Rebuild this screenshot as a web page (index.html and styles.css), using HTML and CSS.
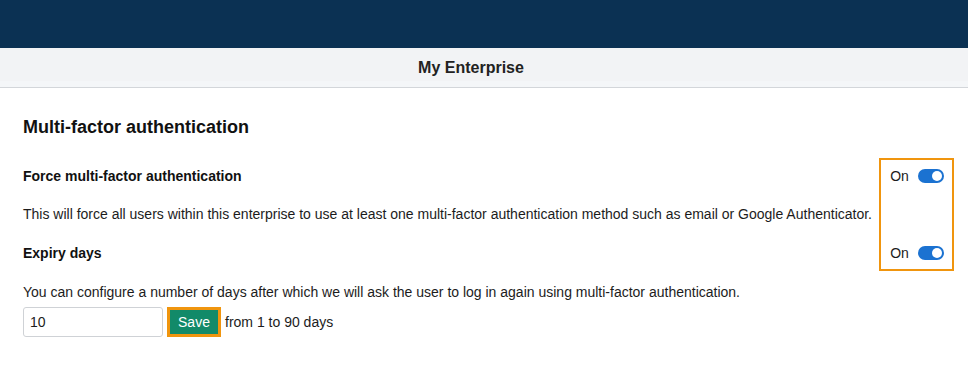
FILE: index.html
```html
<!DOCTYPE html>
<html>
<head>
<meta charset="utf-8">
<link rel="stylesheet" href="styles.css">
</head>
<body>
<header class="topbar"></header>
<div class="subbar"><span class="subbar-title">My Enterprise</span></div>
<main class="content">
  <h2 class="section-title">Multi-factor authentication</h2>
  <div class="settings">
    <div class="label row1">Force multi-factor authentication</div>
    <div class="highlight"></div>
    <div class="switch-cell row1">
      <span class="switch-text">On</span>
      <span class="switch"><span class="knob"></span></span>
    </div>
    <p class="desc row2">This will force all users within this enterprise to use at least one multi-factor authentication method such as email or Google Authenticator.</p>
    <div class="label row3">Expiry days</div>
    <div class="switch-cell row3">
      <span class="switch-text">On</span>
      <span class="switch"><span class="knob"></span></span>
    </div>
    <p class="desc2">You can configure a number of days after which we will ask the user to log in again using multi-factor authentication.</p>
    <div class="days-row">
      <input class="days-input" type="text" value="10">
      <button class="save-btn">Save</button>
      <span class="days-hint">from 1 to 90 days</span>
    </div>
  </div>
</main>
</body>
</html>
```
FILE: styles.css
```css
* { box-sizing: border-box; }
html, body { margin: 0; padding: 0; background: #fff; }
body {
  font-family: "Liberation Sans", Arial, sans-serif;
  font-size: 14px;
  color: #1c1c1c;
}
.topbar {
  height: 48px;
  background: #0b3153;
}
.subbar {
  height: 40px;
  background: #f2f3f5;
  border-bottom: 1px solid #d3d6da;
  box-shadow: inset 0 -6px 0 #f4f6f8;
  display: flex;
  align-items: center;
  justify-content: center;
  padding-right: 26px;
}
.subbar-title {
  font-weight: bold;
  font-size: 16px;
  color: #222;
}
.content {
  padding: 28px 14px 0 23px;
}
.section-title {
  margin: 0;
  font-size: 18px;
  line-height: 22px;
  font-weight: bold;
  color: #111;
}
.settings {
  margin-top: 20px;
  display: grid;
  grid-template-columns: 1fr 75px;
  grid-template-rows: 36px 40px 37px auto auto;
  align-items: center;
}
.label {
  grid-column: 1;
  font-weight: bold;
  font-size: 14px;
  line-height: 16px;
  color: #111;
}
.row1 { grid-row: 1; }
.row2 { grid-row: 2; }
.row3 { grid-row: 3; }
.highlight {
  grid-column: 2;
  grid-row: 1 / 4;
  align-self: stretch;
  border: 2px solid #f0950e;
}
.switch-cell {
  grid-column: 2;
  display: flex;
  align-items: center;
  justify-content: center;
  gap: 9px;
  padding-left: 1px;
}
.switch-text {
  font-size: 14px;
  line-height: 16px;
  color: #1c1c1c;
}
.switch {
  width: 26px;
  height: 14px;
  border-radius: 7px;
  background: #1b72d1;
  display: flex;
  align-items: center;
  justify-content: flex-end;
  padding-right: 2px;
}
.knob {
  width: 10px;
  height: 10px;
  border-radius: 50%;
  background: #fff;
}
.desc {
  grid-column: 1 / 3;
  margin: 0;
  line-height: 16px;
}
.desc2 {
  grid-column: 1 / 3;
  grid-row: 4;
  margin: 13px 0 0 0;
  line-height: 16px;
}
.days-row {
  grid-column: 1 / 3;
  grid-row: 5;
  margin-top: 7px;
  display: flex;
  align-items: center;
}
.days-input {
  width: 140px;
  height: 30px;
  border: 1px solid #cfd2d6;
  border-radius: 3px;
  padding: 0 6px;
  font-family: "Liberation Sans", Arial, sans-serif;
  font-size: 14px;
  color: #1c1c1c;
  background: #fff;
}
.save-btn {
  margin-left: 7px;
  width: 48px;
  height: 24px;
  border: none;
  outline: 3px solid #f0950e;
  background: #128a69;
  color: #fff;
  font-family: "Liberation Sans", Arial, sans-serif;
  font-size: 14px;
  padding: 0;
}
.days-hint {
  margin-left: 7px;
}
```
